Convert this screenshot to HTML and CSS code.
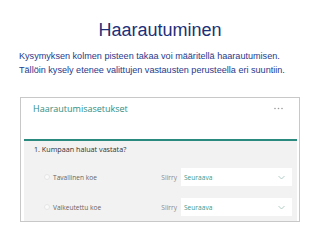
FILE: index.html
```html
<!DOCTYPE html>
<html lang="fi">
<head>
<meta charset="utf-8">
<link rel="stylesheet" href="styles.css">
</head>
<body>
<div class="slide">
  <h1 class="title">Haarautuminen</h1>
  <p class="intro">Kysymyksen kolmen pisteen takaa voi määritellä haarautumisen.<br>Tällöin kysely etenee valittujen vastausten perusteella eri suuntiin.</p>
  <div class="card">
    <div class="card-head">
      <span class="card-title">Haarautumisasetukset</span>
      <svg class="more" width="9" height="3" viewBox="0 0 9 3"><circle cx="1" cy="1.5" r="0.8" fill="#9a9a9a"/><circle cx="4.5" cy="1.5" r="0.8" fill="#9a9a9a"/><circle cx="8" cy="1.5" r="0.8" fill="#9a9a9a"/></svg>
    </div>
    <div class="card-body">
      <div class="question">1. Kumpaan haluat vastata?</div>
      <div class="option">
        <span class="radio"></span>
        <span class="opt-text">Tavallinen koe</span>
        <span class="goto">Siirry</span>
        <div class="select"><span>Seuraava</span><svg class="chev" width="7" height="5" viewBox="0 0 7 5"><path d="M0.5 1 L3.5 4 L6.5 1" fill="none" stroke="#a9c7c3" stroke-width="0.9"/></svg></div>
      </div>
      <div class="option">
        <span class="radio"></span>
        <span class="opt-text">Vaikeutettu koe</span>
        <span class="goto">Siirry</span>
        <div class="select"><span>Seuraava</span><svg class="chev" width="7" height="5" viewBox="0 0 7 5"><path d="M0.5 1 L3.5 4 L6.5 1" fill="none" stroke="#a9c7c3" stroke-width="0.9"/></svg></div>
      </div>
    </div>
  </div>
</div>
</body>
</html>
```

FILE: styles.css
```css
html, body {
  margin: 0;
  padding: 0;
  background: #ffffff;
}
.slide {
  width: 320px;
  height: 240px;
  overflow: hidden;
  display: flex;
  flex-direction: column;
  font-family: "Liberation Sans", Arial, sans-serif;
}
.title {
  margin: 0;
  padding-top: 20px;
  font-size: 18px;
  line-height: 20px;
  font-weight: normal;
  text-align: center;
  color: #1c2f78;
}
.intro {
  margin: 9px 0 0 19px;
  font-size: 9.1px;
  line-height: 14px;
  color: #1f3a8c;
}
.card {
  margin: 20px 20px 0 20px;
  height: 123px;
  border: 1px solid #c8c8c8;
  padding: 0 2px 0 3px;
  display: flex;
  flex-direction: column;
  font-family: "Open Sans", "Noto Sans", sans-serif;
}
.card-head {
  height: 37px;
  display: flex;
  justify-content: space-between;
  align-items: flex-start;
  padding: 4px 14px 0 9px;
  border-bottom: 2px solid #2a8a80;
}
.card-title {
  font-size: 9px;
  line-height: 14px;
  color: #2e8e84;
}
.more {
  display: block;
  margin-top: 5px;
}
.card-body {
  flex: 1;
  background: #f2f2f2;
  display: flex;
  flex-direction: column;
  padding: 3px 5px 0 10px;
}
.question {
  font-size: 7.2px;
  line-height: 10px;
  color: #333333;
}
.option {
  display: grid;
  grid-template-columns: 9px 1fr auto 111px;
  align-items: center;
  height: 18px;
  margin-top: 14px;
  padding-left: 10px;
}
.option + .option {
  margin-top: 12px;
}
.radio {
  width: 4px;
  height: 4px;
  border-radius: 50%;
  border: 1px solid #e6e6e6;
  background: #fafafa;
}
.opt-text {
  font-size: 6.6px;
  color: #666666;
}
.goto {
  font-size: 6.6px;
  color: #8a8a8a;
  margin-right: 4px;
}
.select {
  height: 18px;
  background: #ffffff;
  display: flex;
  align-items: center;
  justify-content: space-between;
  padding: 0 7px 0 3px;
}
.select span {
  font-size: 6.6px;
  color: #3a9a8e;
}
.chev {
  display: block;
}
```
